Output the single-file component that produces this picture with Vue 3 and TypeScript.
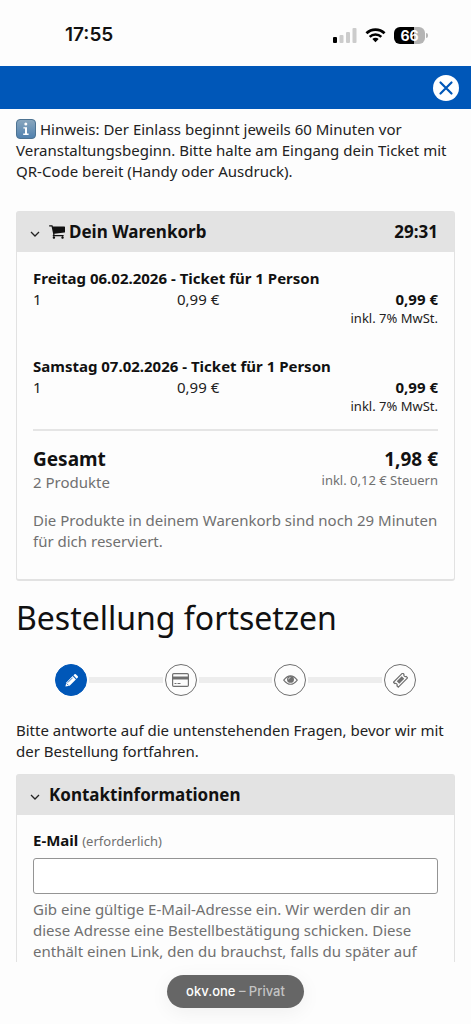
<script setup lang="ts">
import { ref } from 'vue'

interface CartLine {
  name: string
  count: number
  price: string
}

const lines: CartLine[] = [
  { name: 'Freitag 06.02.2026 - Ticket für 1 Person', count: 1, price: '0,99 €' },
  { name: 'Samstag 07.02.2026 - Ticket für 1 Person', count: 1, price: '0,99 €' },
]

const email = ref('')
const cartOpen = ref(true)
const contactOpen = ref(true)
</script>

<template>
  <div class="screen">
    <div class="statusbar">
      <span class="clock">17:55</span>
      <div class="indicators">
        <svg class="signal" viewBox="0 0 24 16" aria-hidden="true">
          <rect x="0" y="10" width="4" height="6" rx="1" fill="#000" />
          <rect x="6.500" y="8" width="4" height="8" rx="1" fill="#ccc" />
          <rect x="13" y="5" width="4" height="11" rx="1" fill="#ccc" />
          <rect x="19.500" y="1" width="4" height="15" rx="1" fill="#ccc" />
        </svg>
        <svg class="wifi" viewBox="0 0 22 16" aria-hidden="true">
          <path d="M1.500 6.200a13.500 13.500 0 0 1 19 0" fill="none" stroke="#000" stroke-width="2.800" />
          <path d="M4.900 9.900a8.600 8.600 0 0 1 12.200 0" fill="none" stroke="#000" stroke-width="2.600" />
          <path d="M11 15.600 7.700 12.300a4.700 4.700 0 0 1 6.600 0z" fill="#000" />
        </svg>
        <span class="battery"><span class="level">66</span><span class="cap"></span></span>
      </div>
    </div>

    <header class="topbar">
      <button class="close" type="button" aria-label="Schließen">
        <svg viewBox="0 0 26 26" aria-hidden="true">
          <path d="M7.500 7.500l11 11M18.500 7.500l-11 11" stroke="#0057b8" stroke-width="2.200" stroke-linecap="round" />
        </svg>
      </button>
    </header>

    <main class="content">
      <p class="notice">
        <svg class="info" viewBox="0 0 20 20" aria-hidden="true">
          <defs>
            <linearGradient id="infoFill" x1="0" y1="0" x2="0" y2="1">
              <stop offset="0" stop-color="#8aa7be" />
              <stop offset="1" stop-color="#4f80ae" />
            </linearGradient>
          </defs>
          <rect x="0.500" y="0.500" width="19" height="19" rx="3.500" fill="url(#infoFill)" stroke="#4d7392" />
          <circle cx="9.800" cy="5" r="1.500" fill="#fff" />
          <path d="M7.400 8.200h3.600v6.400h1.600v1.400H7.200v-1.400h1.800V9.600H7.400z" fill="#fff" />
        </svg>
        Hinweis: Der Einlass beginnt jeweils 60 Minuten vor Veranstaltungsbeginn. Bitte halte am Eingang dein Ticket mit QR-Code bereit (Handy oder Ausdruck).
      </p>

      <section class="panel cart">
        <h2 class="panel-head">
          <button type="button" :aria-expanded="cartOpen" @click="cartOpen = !cartOpen">
            <svg class="chevron" viewBox="0 0 10 10" aria-hidden="true">
              <path d="M1 3l4 4 4-4" fill="none" stroke="#222" stroke-width="1.300" />
            </svg>
            <svg class="trolley" viewBox="0 0 1664 1408" aria-hidden="true">
              <path d="M640 1280q0 52-38 90t-90 38-90-38-38-90 38-90 90-38 90 38 38 90zm896 0q0 52-38 90t-90 38-90-38-38-90 38-90 90-38 90 38 38 90zm128-1088v512q0 24-16.500 42.500T1607 768L563 890q13 60 13 70 0 16-24 64h920q26 0 45 19t19 45-19 45-45 19H448q-26 0-45-19t-19-45q0-11 8-31.500t16-36 21.500-40T445 951L268 128H64q-26 0-45-19T0 64t19-45T64 0h256q16 0 28.500 6.500T368 22t13 24.500 8 26 5.500 29.500 4.500 26h1201q26 0 45 19t19 45z" fill="#111" />
            </svg>
            <span class="title">Dein Warenkorb</span>
            <span class="timer">29:31</span>
          </button>
        </h2>
        <div v-show="cartOpen" class="panel-body">
          <div class="lines">
            <div v-for="line in lines" :key="line.name" class="line">
              <strong class="name">{{ line.name }}</strong>
              <span>{{ line.count }}</span>
              <span>{{ line.price }}</span>
              <div class="sum">
                <strong>{{ line.price }}</strong>
                <small>inkl. 7% MwSt.</small>
              </div>
            </div>
          </div>
          <div class="total">
            <div>
              <strong>Gesamt</strong>
              <span class="muted">2 Produkte</span>
            </div>
            <div class="sum">
              <strong>1,98 €</strong>
              <small class="muted">inkl. 0,12 € Steuern</small>
            </div>
          </div>
          <p class="muted reserved">Die Produkte in deinem Warenkorb sind noch 29 Minuten für dich reserviert.</p>
        </div>
      </section>

      <h1>Bestellung fortsetzen</h1>

      <div class="steps">
        <span class="step active">
          <svg viewBox="0 0 16 16" aria-hidden="true">
            <path d="M1.500 14.500l1-4.500 6.700-6.700 3.500 3.500L6 13.500z" fill="#fff" />
            <path d="M10 2.500l1.200-1.200q.7-.6 1.400 0l2.100 2.100q.6.700 0 1.400L13.500 6z" fill="#fff" />
            <path d="M4 10.200l5.200-5.200M2.800 11.200l2 2" stroke="#0057b8" stroke-width=".8" />
          </svg>
        </span>
        <span class="rail"></span>
        <span class="step">
          <svg class="card" viewBox="0 0 17 14" aria-hidden="true">
            <rect x=".6" y=".6" width="15.800" height="12.800" rx="1.200" fill="none" stroke="#707070" stroke-width="1.200" />
            <path d="M1 3.500h15v3H1z" fill="#707070" />
            <path d="M2.500 10.500h2M5.500 10.500h3" stroke="#707070" />
          </svg>
        </span>
        <span class="rail"></span>
        <span class="step">
          <svg viewBox="0 0 16 16" aria-hidden="true">
            <path d="M.8 7.500Q8-1.500 15.200 7.500 8 16.500.8 7.500z" fill="none" stroke="#707070" stroke-width="1.200" />
            <circle cx="8" cy="6.800" r="3.700" fill="#707070" />
            <path d="M5.900 6.800q0-2 2.100-2" fill="none" stroke="#fff" stroke-width=".7" />
          </svg>
        </span>
        <span class="rail"></span>
        <span class="step">
          <svg viewBox="0 0 16 16" aria-hidden="true">
            <g transform="rotate(-45 8 7.500)">
              <path d="M1 3.800h14v2a1.800 1.800 0 0 0 0 3.400v2H1v-2a1.800 1.800 0 0 0 0-3.400z" fill="none" stroke="#707070" stroke-width="1.300" />
              <path d="M4.200 5.600h7.600v3.800H4.200z" fill="#707070" />
            </g>
          </svg>
        </span>
      </div>

      <p class="intro">Bitte antworte auf die untenstehenden Fragen, bevor wir mit der Bestellung fortfahren.</p>

      <section class="panel contact">
        <h2 class="panel-head">
          <button type="button" :aria-expanded="contactOpen" @click="contactOpen = !contactOpen">
            <svg class="chevron" viewBox="0 0 10 10" aria-hidden="true">
              <path d="M1 3l4 4 4-4" fill="none" stroke="#222" stroke-width="1.300" />
            </svg>
            <span class="title">Kontaktinformationen</span>
          </button>
        </h2>
        <div v-show="contactOpen" class="panel-body form">
          <label for="email"><strong>E-Mail</strong> <small class="muted">(erforderlich)</small></label>
          <input id="email" v-model="email" type="email" required aria-describedby="email-help" />
          <p id="email-help" class="muted">Gib eine gültige E-Mail-Adresse ein. Wir werden dir an diese Adresse eine Bestellbestätigung schicken. Diese enthält einen Link, den du brauchst, falls du später auf</p>
        </div>
      </section>
    </main>

    <footer class="browserbar">
      <div class="address"><span class="host">okv.one</span> – Privat</div>
    </footer>
  </div>
</template>

<style>
body {
  margin: 0;
  background: #fdfdfd;
}
</style>

<style scoped>
.screen {
  font: 15px/21px "Noto Sans", sans-serif;
  color: #222;
}

p,
h1,
h2 {
  margin: 0;
}

strong {
  font-weight: 700;
  color: #111;
}

small {
  font-size: 13px;
  line-height: 16px;
}

.muted {
  color: #707070;
}

.statusbar {
  display: flex;
  justify-content: space-between;
  align-items: center;
  height: 66px;
  padding: 4px 43px 0 65px;
  box-sizing: border-box;
}

.clock {
  font: 600 19px/24px Inter, sans-serif;
  color: #111;
}

.indicators {
  display: flex;
  align-items: center;
  gap: 8px;
}

.signal {
  width: 24px;
  height: 16px;
}

.wifi {
  width: 21px;
  height: 16px;
}

.battery {
  display: flex;
  align-items: center;
  gap: 1px;
}

.level {
  width: 31px;
  height: 17px;
  border-radius: 6px;
  background: linear-gradient(90deg, #000 66%, #b5b5b5 66%);
  color: #fff;
  font: 700 14px/17px Inter, sans-serif;
  text-align: center;
}

.cap {
  width: 2px;
  height: 5px;
  border-radius: 0 2px 2px 0;
  background: #b5b5b5;
}

.topbar {
  display: flex;
  justify-content: flex-end;
  align-items: center;
  height: 43px;
  padding-right: 12px;
  background: #0057b8;
}

.close {
  width: 26px;
  height: 26px;
  padding: 0;
  border: 0;
  border-radius: 50%;
  background: #fff;
}

.close svg {
  display: block;
}

.content {
  padding: 10px 16px 0;
}

.info {
  width: 20px;
  height: 20px;
  vertical-align: -4px;
}

.panel {
  border: 1px solid #e2e2e2;
  border-radius: 3px;
}

.cart {
  margin-top: 29px;
  border-bottom-width: 2px;
}

.panel-head {
  font-size: 17px;
  line-height: 24px;
}

.panel-head button {
  display: flex;
  align-items: center;
  width: 100%;
  padding: 8px 16px;
  border: 0;
  background: #e3e3e3;
  color: #111;
  font: inherit;
  text-align: left;
}

.chevron {
  flex: none;
  width: 10px;
  height: 10px;
  margin: 3px 9px 0 -3px;
}

.panel-head .title {
  flex: 1;
}

.trolley {
  flex: none;
  width: 16px;
  height: 14px;
  margin-right: 4px;
}

.panel-body {
  padding: 16px;
}

.lines {
  display: grid;
  gap: 30px;
  padding-bottom: 15px;
}

.line {
  display: grid;
  grid-template-columns: 144px 1fr auto;
}

.name {
  grid-column: 1 / -1;
}

.sum {
  display: flex;
  flex-direction: column;
  align-items: flex-end;
}

.total {
  display: flex;
  justify-content: space-between;
  border-top: 2px solid #e5e5e5;
  padding-top: 15px;
}

.total strong {
  display: block;
  font-size: 19px;
  line-height: 26px;
}

.reserved {
  margin: 17px 0 11px;
}

h1 {
  margin-top: 13px;
  font-size: 32px;
  line-height: 48px;
  font-weight: 400;
  color: #111;
}

.steps {
  display: flex;
  align-items: center;
  margin-top: 22px;
  padding: 0 39px;
}

.step {
  display: flex;
  align-items: center;
  justify-content: center;
  flex: none;
  width: 32px;
  height: 32px;
  box-sizing: border-box;
  border: 1px solid #707070;
  border-radius: 50%;
}

.step.active {
  border-color: #0057b8;
  background: #0057b8;
}

.step svg {
  width: 15px;
  height: 15px;
}

.step .card {
  width: 17px;
  height: 14px;
}

.rail {
  flex: 1;
  height: 6px;
  margin: 0 2px;
  background: #ededed;
}

.intro {
  margin-top: 24px;
}

.contact {
  margin-top: 12px;
  border-bottom: 0;
  border-radius: 3px 3px 0 0;
}

.form {
  padding: 15px 16px 0;
}

.form label {
  display: block;
}

.form input {
  display: block;
  width: 100%;
  height: 36px;
  margin: 7px 0 5px;
  padding: 6px 12px;
  box-sizing: border-box;
  border: 1px solid #949494;
  border-radius: 3px;
  background: #fff;
  font: inherit;
}

.browserbar {
  display: flex;
  justify-content: center;
  padding: 13px 0 16px;
}

.address {
  padding: 0 19px;
  border-radius: 17px;
  background: #666;
  box-shadow: 0 4px 20px rgba(0, 0, 0, 0.06);
  color: #c4c4c4;
  font: 500 13px/33px Inter, sans-serif;
}

.host {
  color: #fff;
}
</style>
